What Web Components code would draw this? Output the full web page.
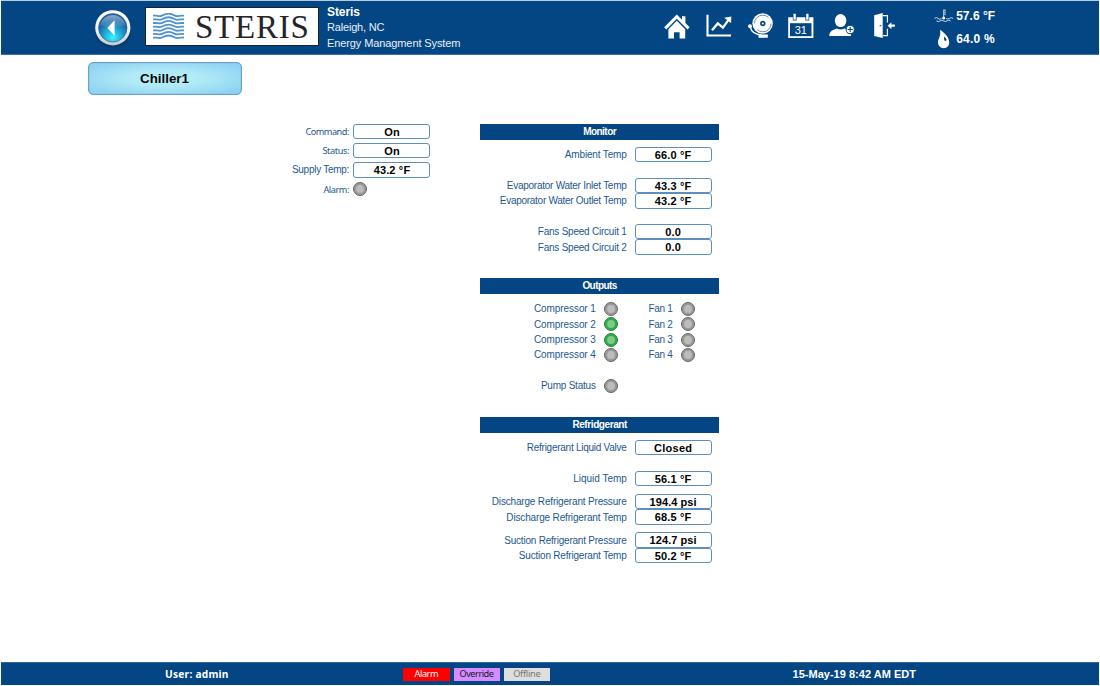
<!DOCTYPE html>
<html lang="en"><head><meta charset="utf-8"><title>Chiller1</title>
<style>html,body{margin:0;background:#fff;font-family:"Liberation Sans",Arial,sans-serif}body{width:1100px;height:686px;overflow:hidden}</style></head>
<body><energy-app></energy-app>
<script>
const define=(name,html,setup)=>customElements.define(name,class extends HTMLElement{
  constructor(){super();this.attachShadow({mode:'open'}).innerHTML=html}
  connectedCallback(){if(setup)setup(this,this.shadowRoot)}
});

/* Text tracked to the width given in its "w" attribute */
define('fit-text','<style>:host{display:inline-block;white-space:nowrap;justify-self:start}</style><slot></slot>',el=>{
  const w=parseFloat(el.getAttribute('w'));if(!w)return;
  el.style.letterSpacing='0';
  const range=document.createRange();range.selectNodeContents(el);
  const s=(w-range.getBoundingClientRect().width)/(el.textContent.length-1);
  el.style.letterSpacing=s+'px';el.style.marginRight=-s+'px';
});

define('value-box',`<style>:host{display:flex;box-sizing:border-box;width:77px;height:15.4px;flex:none;border:1px solid #5d8fbe;border-radius:3px;background:#fff;color:#000;font:bold 11px/14px "Liberation Sans",Arial,sans-serif;justify-content:center;align-items:center}</style><slot></slot>`);

define('status-lamp',`<style>:host{display:block;flex:none;width:14px;height:14px;--o:#999;--i:#bcbcbc;--s:#666}:host([on]){--o:#22b14c;--i:#83c983;--s:#3d7a4a}svg{display:block}</style>
<svg width="14" height="14" viewBox="0 0 14 14"><circle cx="7" cy="7" r="6.5" style="fill:var(--o);stroke:var(--s)" stroke-width="1"/><circle cx="7" cy="7" r="3.900" style="fill:var(--i)"/></svg>`);

define('panel-bar',`<style>:host{display:flex;width:239px;height:15.6px;background:#044684;color:#fff;font:bold 10px/15.6px "Liberation Sans",Arial,sans-serif;justify-content:center}</style><slot></slot>`);

customElements.define('reading-row',class extends HTMLElement{
  connectedCallback(){const a=n=>this.getAttribute(n);
    this.attachShadow({mode:'open'}).innerHTML=`<style>:host{display:flex;height:15.4px;align-items:center;justify-content:flex-end;padding-right:7.8px;color:#23588f;font:10px/15px "Liberation Sans",Arial,sans-serif}value-box{margin-left:7.800px}</style>
    <fit-text w="${a('lw')}">${a('label')}</fit-text><value-box><fit-text w="${a('vw')}">${a('value')}</fit-text></value-box>`}
});
customElements.define('lamp-row',class extends HTMLElement{
  connectedCallback(){const a=n=>this.getAttribute(n);
    this.attachShadow({mode:'open'}).innerHTML=`<style>:host{display:flex;height:15.4px;align-items:center;justify-content:flex-end;gap:8px;color:#23588f;font:10px/15px "Liberation Sans",Arial,sans-serif}</style>
    <fit-text w="${a('lw')}">${a('label')}</fit-text><status-lamp ${this.hasAttribute('on')?'on':''}></status-lamp>`}
});

define('back-button',`<style>:host{display:block;width:42px;height:42px}svg{display:block}</style>
<svg width="42" height="42" viewBox="0 0 42 42"><defs>
<radialGradient id="b" cx=".5" cy=".85" r=".8"><stop offset="0" stop-color="#38f4ff"/><stop offset=".35" stop-color="#20b3dc"/><stop offset=".75" stop-color="#1767a5"/><stop offset="1" stop-color="#285f99"/></radialGradient>
<linearGradient id="r" x2="0" y2="1"><stop offset="0" stop-color="#fff"/><stop offset=".6" stop-color="#eee"/><stop offset="1" stop-color="#c6c8ca"/></linearGradient>
<linearGradient id="g" x2="0" y2="1"><stop offset="0" stop-color="#fff" stop-opacity=".45"/><stop offset="1" stop-color="#fff" stop-opacity=".05"/></linearGradient>
<radialGradient id="s"><stop offset=".6" stop-color="#002347" stop-opacity=".75"/><stop offset="1" stop-color="#002347" stop-opacity="0"/></radialGradient></defs>
<ellipse cx="21" cy="27" rx="19" ry="15" fill="url(#s)"/><circle cx="20.8" cy="20.8" r="17.6" fill="url(#r)"/><circle cx="20.8" cy="20.8" r="14.2" fill="url(#b)" stroke="#2b5d8c" stroke-width=".7"/><path d="M8 18a13 12 0 0 1 25.6 0Q21 23 8 18z" fill="url(#g)"/><path d="M15.300 21l7.300-7.700v15.400z" fill="#fff"/></svg>`);

define('steris-logo',`<style>:host{display:flex;box-sizing:border-box;width:174px;height:39px;background:#fff;border:1px solid #18232f;padding-left:7px;align-items:center}svg{display:block;flex:none}.n{margin-left:10.5px;font:33px/36px "Liberation Serif",serif;color:#252525;padding-top:1px}</style>
<svg width="31" height="27" viewBox="0 0 31 27" fill="none" stroke="#4f92d2" stroke-width="1.8"></svg><fit-text class="n" w="114">STERIS</fit-text>`,(el,r)=>{
  r.querySelector('svg').innerHTML=Array.from({length:7},(_,i)=>`<path d="M0 ${2.7+i*3.65}h2.500c4.500 0 4 1.200 6.500-.1s4-2 6.500-2 4 .7 6.500 2 2 .1 6.500.1h2.500"/>`).join('');
});

const glyphs={
home:'<path d="M.2 14.300L12.800 1.500l5.200 5.200V3.200h3.400v6.900l4.200 4.200-2.100 2.200L12.800 5.800 2.300 16.500z"/><path d="M4.400 16.300l8.400-8.500 8.400 8.500v9.200h-5.600v-6.200H10v6.200H4.400z"/>',
chart:'<path d="M1.500 1.700v20.800H25" fill="none" stroke="#fff" stroke-width="2.100"/><path d="M6 17.200l5.800-6.800 5.100 4.200 6.300-8.800" fill="none" stroke="#fff" stroke-width="2.300"/><path d="M18.300 4.800l7-1.200-.2 6.700z"/>',
bell:'<circle cx="14.600" cy="10.500" r="10.200"/><circle cx="14.800" cy="10.500" r="8.300" fill="none" stroke="#044684" stroke-width=".6" stroke-dasharray="19 7"/><circle cx="14.800" cy="10.500" r="2.700" fill="#044684"/><circle cx="14.800" cy="10.500" r="1.100"/><circle cx="2" cy="13.200" r="2"/><path d="M2.200 14c1.300 5.300 5.800 7.800 11.500 7.800" stroke="#fff" stroke-width="1.300" fill="none"/><path d="M10.500 21.500h9.300v3.300h-9.300z"/>',
calendar:'<path d="M.2 4.300h4.600v3.200h3.800V4.300h8.800v3.200h3.800V4.300h4.200V25H.2z"/><path d="M2 10.200h21.500v13H2z" fill="#044684"/><path d="M5.500.8h2.300v6H5.500zM18.200.8h2.300v6h-2.300z"/><text x="12.800" y="20.600" text-anchor="middle" font-family="Liberation Sans, sans-serif" font-size="11">31</text>',
user:'<ellipse cx="11.600" cy="7.600" rx="5.800" ry="6.500"/><path d="M.3 23C.6 18.800 2.200 17.400 7.700 15.500q4 2.100 8 0l5 1.900 1.500 5.600z"/><circle cx="21.200" cy="16.500" r="4.100" stroke="#044684" stroke-width="1"/><path d="M18.600 16.500h5.200M21.200 13.900v5.200" stroke="#044684" stroke-width="1.100"/>',
door:'<path d="M1.200 2.200L9.700.1v25L1.200 22.900z"/><path d="M9.700 2.600h4.700v7M14.400 15.800v6.800H9.700" fill="none" stroke="#fff" stroke-width="1.100"/><path d="M6.700 12.700h1.500" stroke="#044684" stroke-width="1.100"/><path d="M14.700 12.700l3.700-3.500v2.400h3.500v2.200h-3.500v2.400z"/>'};
define('nav-icon','<style>:host{display:block;width:26px;height:26px}svg{display:block}</style><svg width="26" height="26" viewBox="0 0 26 26" fill="#fff"></svg>',(el,r)=>{r.querySelector('svg').innerHTML=glyphs[el.getAttribute('name')]});

define('top-bar',`<style>:host{display:flex;box-sizing:border-box;width:1098.500px;height:54.500px;margin-left:.5px;background:#044684;border-top:1px solid #b3cddd;border-bottom:1px solid #3e719f;color:#fff;align-items:flex-start;padding-left:91.5px}
back-button{margin-top:5.500px;flex:none}steris-logo{margin:6.400px 0 0 11.400px;flex:none}.info{display:flex;flex-direction:column;align-items:flex-start;margin:3.900px 0 0 7.600px;width:337px;font-size:11px;line-height:15.600px;flex:none}.info>:first-child{font-weight:bold;font-size:12px}.info>*+*{color:#e9f0f7}
nav{display:grid;grid-template-columns:42px 42px 40.500px 41px 44px 26px;margin-top:11.500px;flex:none}
.w{display:grid;grid-template-columns:22px 50px;grid-template-rows:23px 23px;align-items:center;margin:3.500px 0 0 34.700px;font:bold 12px/16px "Liberation Sans",sans-serif}svg{display:block}</style>
<back-button></back-button><steris-logo></steris-logo><div class="info"><fit-text w="33">Steris</fit-text><fit-text w="57.500">Raleigh, NC</fit-text><fit-text w="133.500">Energy Managment System</fit-text></div>
<nav><nav-icon name="home"></nav-icon><nav-icon name="chart"></nav-icon><nav-icon name="bell"></nav-icon><nav-icon name="calendar"></nav-icon><nav-icon name="user"></nav-icon><nav-icon name="door"></nav-icon></nav>
<div class="w"><svg width="20" height="14" viewBox="0 0 20 14" fill="none" stroke="#d8e6f1" stroke-width=".9"><path d="M9.700.5v8M10 1.200h2M10 3.200h2M10 5.200h2"/><circle cx="9.700" cy="9" r="1.500" fill="#fff" stroke="none"/><path d="M.5 9.400q2-1.700 3.500 0t3.500 0M12 9.400q1.700 1.500 3.500 0t3.700 0M2.500 11.900q2 1.300 3.500 0t3.500 0 3.500 0 3.500 0"/></svg><fit-text w="39">57.6 °F</fit-text>
<svg width="20" height="20" viewBox="0 0 20 20"><path d="M6 .8C11 4 15.200 8.700 15.200 13.300c0 3.600-2.300 5.900-5.400 5.900S4 16.900 4 13.500C4 9.500 7.300 7.500 6 .8z" fill="#fff"/><path d="M10.300 7.500c2.200 2 2.800 3.700 1.700 4.300-1.400.6-2.500-.8-1.700-4.300z" fill="#044684"/></svg><fit-text w="38.500">64.0 %</fit-text></div>`);

define('page-button',`<style>:host{display:flex;box-sizing:border-box;width:154px;height:33px;border:1px solid #6aa0ca;border-radius:5px;background:radial-gradient(ellipse at center,#b9eef8 0,#b0eaf7 35%,#90d3f3 85%);box-shadow:inset 0 0 1px #4689b8;color:#080808;font:bold 13.300px/32px "Liberation Sans",sans-serif;justify-content:center}</style><slot></slot>`);

define('command-panel',`<style>:host{display:block;width:147px}div{display:grid;grid-template-columns:66px 77px;column-gap:4px;height:19.200px;align-items:center;color:#23588f;font:9.200px/15px "Noto Sans",sans-serif}div>fit-text{justify-self:end}.a{font-family:"Liberation Sans";font-size:10px}</style>
<div><fit-text w="44">Command:</fit-text><value-box><fit-text w="15.500">On</fit-text></value-box></div><div><fit-text w="27">Status:</fit-text><value-box><fit-text w="15.500">On</fit-text></value-box></div><div><fit-text class="a" w="57.500">Supply Temp:</fit-text><value-box><fit-text w="36.500">43.2 °F</fit-text></value-box></div><div><fit-text w="26">Alarm:</fit-text><status-lamp></status-lamp></div>`);

define('equipment-panel',`<style>:host{display:block;width:239px}section{height:154px}section+section{height:139px}panel-bar{margin-bottom:7.500px}.g{margin-top:15.400px}.h{margin-top:7.700px}.out{display:grid;grid-template-columns:137.500px 77px;align-items:start}</style>
<section><panel-bar><fit-text w="33.500">Monitor</fit-text></panel-bar><reading-row label="Ambient Temp" lw="62" value="66.0 °F" vw="36.500"></reading-row><reading-row class="g" label="Evaporator Water Inlet Temp" lw="120" value="43.3 °F" vw="36.500"></reading-row><reading-row label="Evaporator Water Outlet Temp" lw="127" value="43.2 °F" vw="36.500"></reading-row><reading-row class="g" label="Fans Speed Circuit 1" lw="89" value="0.0" vw="15.500"></reading-row><reading-row label="Fans Speed Circuit 2" lw="89" value="0.0" vw="15.500"></reading-row></section>
<section><panel-bar><fit-text w="35">Outputs</fit-text></panel-bar><div class="out"><div><lamp-row label="Compressor 1" lw="62"></lamp-row><lamp-row on label="Compressor 2" lw="62"></lamp-row><lamp-row on label="Compressor 3" lw="62"></lamp-row><lamp-row label="Compressor 4" lw="62"></lamp-row><lamp-row class="g" label="Pump Status" lw="55"></lamp-row></div><div><lamp-row label="Fan 1" lw="24.500"></lamp-row><lamp-row label="Fan 2" lw="24.500"></lamp-row><lamp-row label="Fan 3" lw="24.500"></lamp-row><lamp-row label="Fan 4" lw="24.500"></lamp-row></div></div></section>
<section><panel-bar><fit-text w="55">Refridgerant</fit-text></panel-bar><reading-row label="Refrigerant Liquid Valve" lw="100" value="Closed" vw="38"></reading-row><reading-row class="g" label="Liquid Temp" lw="53.500" value="56.1 °F" vw="36.500"></reading-row><reading-row class="h" label="Discharge Refrigerant Pressure" lw="135" value="194.4 psi" vw="47"></reading-row><reading-row label="Discharge Refrigerant Temp" lw="120.500" value="68.5 °F" vw="36.500"></reading-row><reading-row class="h" label="Suction Refrigerant Pressure" lw="122.500" value="124.7 psi" vw="47"></reading-row><reading-row label="Suction Refrigerant Temp" lw="108" value="50.2 °F" vw="36.500"></reading-row></section>`);

define('bottom-bar',`<style>:host{display:grid;box-sizing:border-box;grid-template-columns:239px 310px 242.500px 1fr;width:1098px;height:23px;margin-left:1px;background:#044684;border-top:1px solid #2d669a;align-items:center;color:#fff;font:bold 11px/16px "Liberation Sans",sans-serif}.u{font:bold 10.200px/16px "Noto Sans",sans-serif;margin-left:164px}.s{display:flex;gap:4px;justify-content:flex-end}.s span{display:flex;justify-content:center;width:46.200px;height:13px;font:9.200px/12px "Noto Sans",sans-serif}.al{background:#f00}.ov{background:#d48cff;color:#20162a}.of{background:#dedede;color:#777}</style>
<fit-text class="u" w="63.500">User: admin</fit-text><div class="s"><span class="al"><fit-text w="24">Alarm</fit-text></span><span class="ov"><fit-text w="34.500">Override</fit-text></span><span class="of"><fit-text w="27.500">Offline</fit-text></span></div><i></i><fit-text w="123.500">15-May-19 8:42 AM EDT</fit-text>`);

define('energy-app',`<style>:host{display:flex;flex-direction:column;width:1100px;height:685px;font-family:"Liberation Sans",Arial,sans-serif}page-button{margin:7.800px 0 0 87.500px}main{flex:1;display:grid;grid-template-columns:147px 239px;column-gap:50px;padding:28.700px 0 0 283.400px;align-items:start}command-panel{margin-top:-2px}</style>
<top-bar></top-bar><page-button>Chiller1</page-button><main><command-panel></command-panel><equipment-panel></equipment-panel></main><bottom-bar></bottom-bar>`);
</script></body></html>
